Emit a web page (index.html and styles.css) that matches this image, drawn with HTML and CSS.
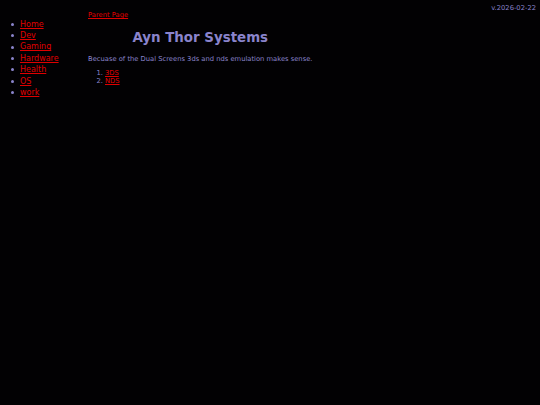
FILE: index.html
```html
<!DOCTYPE html>
<html>
<head>
<meta charset="utf-8">
<link rel="stylesheet" href="styles.css">
</head>
<body>
<div class="version">v.2026-02-22</div>
<div class="layout">
  <nav class="sidebar">
    <ul class="nav">
      <li><a href="#">Home</a></li>
      <li><a href="#">Dev</a></li>
      <li><a href="#">Gaming</a></li>
      <li><a href="#">Hardware</a></li>
      <li><a href="#">Health</a></li>
      <li><a href="#">OS</a></li>
      <li><a href="#">work</a></li>
    </ul>
  </nav>
  <main class="content">
    <a class="parent" href="#">Parent Page</a>
    <h1 class="title">Ayn Thor Systems</h1>
    <p class="text">Becuase of the Dual Screens 3ds and nds emulation makes sense.</p>
    <ol class="sub">
      <li><a href="#">3DS</a></li>
      <li><a href="#">NDS</a></li>
    </ol>
  </main>
</div>
</body>
</html>
```
FILE: styles.css
```css
html, body {
  margin: 0;
  padding: 0;
  background: #020103;
  color: #8a84cc;
  font-family: "DejaVu Sans", Verdana, sans-serif;
}
body {
  width: 540px;
  height: 405px;
  position: relative;
}
a {
  color: #e00000;
}
.version {
  position: absolute;
  top: 4px;
  right: 4px;
  font-size: 6.75px;
}
.layout {
  display: flex;
  align-items: flex-start;
  padding-top: 10px;
}
.sidebar {
  width: 88px;
  flex: none;
}
.nav {
  list-style: none;
  margin: 8.5px 0 0;
  padding-left: 11px;
  font-size: 8px;
  line-height: 11.4px;
}
.nav li {
  display: flex;
  align-items: center;
  gap: 6px;
}
.nav li::before {
  content: "";
  width: 3px;
  height: 3px;
  border-radius: 50%;
  background: #8a84cc;
  flex: none;
}
.content {
  display: flex;
  flex-direction: column;
  align-items: flex-start;
  font-size: 6.75px;
}
.parent {
  line-height: 10px;
}
.title {
  align-self: center;
  font-size: 13.4px;
  font-weight: bold;
  margin: 8px 0 0;
  line-height: 20px;
}
.text {
  margin: 7px 0 0;
  line-height: 8px;
}
.sub {
  margin: 6px 0 0;
  padding-left: 17px;
  line-height: 8px;
}
```
